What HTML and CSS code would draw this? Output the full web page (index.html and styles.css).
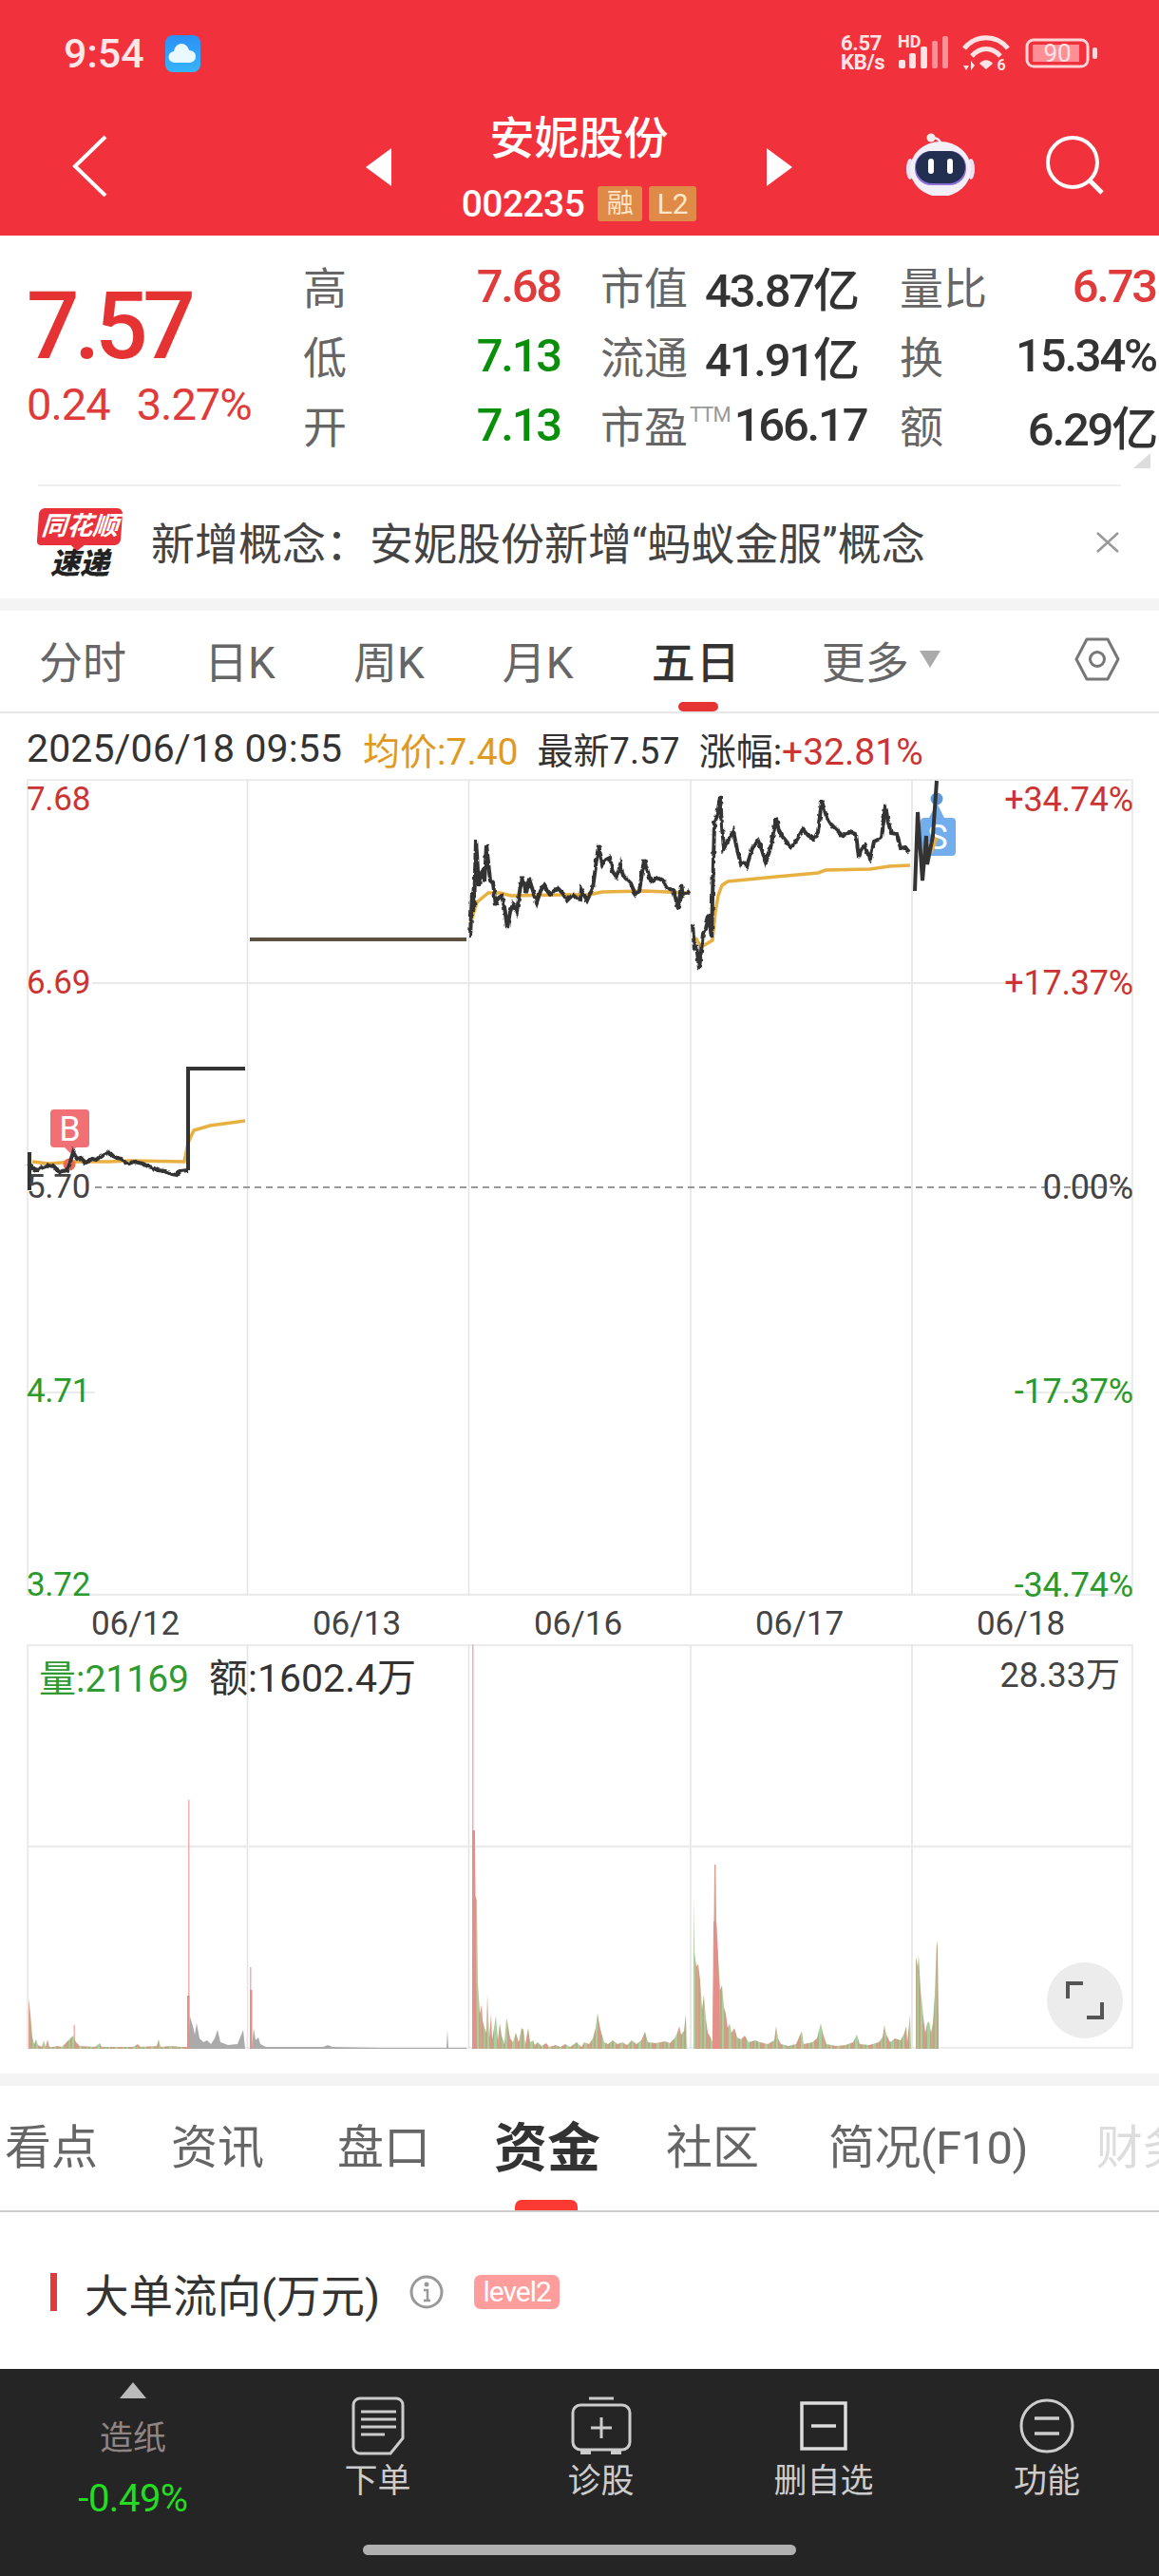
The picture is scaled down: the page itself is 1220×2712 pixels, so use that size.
FILE: index.html
```html
<!DOCTYPE html>
<html lang="zh-CN">
<head>
<meta charset="utf-8">
<title>安妮股份</title>
<link rel="stylesheet" href="styles.css">
</head>
<body>
<div class="page">
  <header class="header">
    <div class="status">
      <div class="status-left">
        <span class="time">9:54</span>
        <svg class="cloud" viewBox="0 0 37 39"><defs><linearGradient id="cg" x1="0" y1="0" x2="0" y2="1"><stop offset="0" stop-color="#2c8ff5"/><stop offset="1" stop-color="#37b4fb"/></linearGradient></defs><rect width="37" height="39" rx="8" fill="url(#cg)"/><path d="M10 29a6 6 0 0 1-1-12c1-5 4-8 8-8s7 3 8 7a6.5 6.5 0 0 1 1 13z" fill="#eaf8ff"/></svg>
      </div>
      <div class="status-right">
        <div class="speed"><span>6.57</span><span>KB/s</span></div>
        <div class="signal">
          <span class="hd">HD</span>
          <svg class="bars" viewBox="0 0 52 34"><rect x="0" y="25" width="7" height="9" rx="2" fill="#ffe3e5"/><rect x="11" y="18" width="7" height="16" rx="2" fill="#ffe3e5"/><rect x="23" y="11" width="7" height="23" rx="2" fill="#ffe3e5"/><rect x="35" y="5" width="6" height="29" rx="2" fill="#ff8f96"/><rect x="46" y="0" width="6" height="34" rx="2" fill="#ff8f96"/></svg>
        </div>
        <svg class="wifi" viewBox="0 -2 50 44"><g fill="none" stroke="#ffe3e5" stroke-width="5"><path d="M2 15C14 0 36 0 48 15"/><path d="M10 23c9-10 21-10 30 0"/></g><path d="M18 31c4-5 10-5 14 0l-7 6z" fill="#ffe3e5"/><text x="41" y="38" class="wifi-num">6</text><path d="M1 33h6l-3 5zM9 38V28l4 5z" fill="#ffe3e5"/></svg>
        <svg class="battery" viewBox="0 0 76 32"><rect x="2" y="2" width="64" height="28" rx="7" fill="none" stroke="#ffd4d7" stroke-width="3"/><rect x="8" y="7" width="49" height="18" fill="#ff8f96"/><rect x="71" y="10" width="5" height="12" rx="2" fill="#ffd4d7"/><text x="34" y="25" class="batt-num">90</text></svg>
      </div>
    </div>
    <nav class="nav">
      <div class="nav-back">
        <svg class="chevron" viewBox="0 0 37 65"><path d="M35 2 3 33l32 31" fill="none" stroke="#fff" stroke-width="4"/></svg>
      </div>
      <div class="nav-mid">
        <svg class="tri" viewBox="0 0 27 40"><path d="M27 0v40L0 20z" fill="#fff"/></svg>
        <div class="nav-title">
          <div class="stock-name">安妮股份</div>
          <div class="stock-code"><span>002235</span><b class="chip chip-a">融</b><b class="chip chip-b">L2</b></div>
        </div>
        <svg class="tri" viewBox="0 0 27 40"><path d="M0 0v40l27-20z" fill="#fff"/></svg>
      </div>
      <div class="nav-right">
        <svg class="robot" viewBox="0 0 72 66">
          <path d="M36 11c-1-5-5-6-9-6" fill="none" stroke="#eef" stroke-width="2.5"/><circle cx="26" cy="5" r="4.5" fill="#eee"/>
          <ellipse cx="4" cy="38" rx="4" ry="11" fill="#e8e2f4"/><ellipse cx="68" cy="38" rx="4" ry="11" fill="#e8e2f4"/>
          <ellipse cx="36" cy="38" rx="32" ry="29" fill="#f2eff8"/>
          <rect x="9" y="19" width="54" height="36" rx="17" fill="#8d6fd8"/>
          <rect x="10" y="19" width="52" height="34" rx="17" fill="#222f50"/>
          <rect x="23" y="27" width="6" height="16" rx="3" fill="#fff"/><rect x="43" y="27" width="6" height="16" rx="3" fill="#fff"/>
        </svg>
        <svg class="search" viewBox="0 0 62 62"><circle cx="29" cy="28" r="26" fill="none" stroke="#fff" stroke-width="4"/><path d="M47 47 60 60" stroke="#fff" stroke-width="5"/></svg>
      </div>
    </nav>
  </header>

  <section class="quote">
    <div class="price">
      <div class="price-main">7.57</div>
      <div class="price-sub"><span>0.24</span><span>3.27%</span></div>
    </div>
    <div class="stats">
      <div class="cell cell-a"><span class="lab">高</span><span class="val up">7.68</span></div>
      <div class="cell cell-b"><span class="lab lab-w">市值</span><span class="val">43.87亿</span></div>
      <div class="cell cell-c"><span class="lab">量比</span><span class="val up">6.73</span></div>
      <div class="cell cell-a"><span class="lab">低</span><span class="val down">7.13</span></div>
      <div class="cell cell-b"><span class="lab lab-w">流通</span><span class="val">41.91亿</span></div>
      <div class="cell cell-c"><span class="lab">换</span><span class="val">15.34%</span></div>
      <div class="cell cell-a"><span class="lab">开</span><span class="val down">7.13</span></div>
      <div class="cell cell-b"><span class="lab">市盈</span><sup class="ttm">TTM</sup><span class="val">166.17</span></div>
      <div class="cell cell-c"><span class="lab">额</span><span class="val">6.29亿</span></div>
    </div>
    <i class="corner"></i>
  </section>

  <section class="news">
    <div class="logo">
      <div class="logo-top">同花顺</div>
      <div class="logo-bot">速递</div>
    </div>
    <p class="news-text">新增概念：安妮股份新增“蚂蚁金服”概念</p>
    <svg class="close" viewBox="0 0 24 22"><path d="M1 1l22 20M23 1 1 21" stroke="#999" stroke-width="2.5" fill="none"/></svg>
  </section>

  <div class="band"></div>

  <div class="ktabs">
    <span>分时</span><span>日K</span><span>周K</span><span>月K</span><span class="on">五日</span>
    <span class="more">更多<i class="more-tri"></i></span>
    <svg class="hex" viewBox="0 0 48 46"><path d="M13 2h22l11 21-11 21H13L2 23z" fill="none" stroke="#777" stroke-width="3" stroke-linejoin="round"/><circle cx="24" cy="23" r="7.5" fill="none" stroke="#777" stroke-width="3"/></svg>
  </div>

  <div class="info">
    <span class="i-date">2025/06/18 09:55</span>
    <span class="i-avg">均价:7.40</span>
    <span class="i-new">最新7.57</span>
    <span class="i-chg">涨幅:<em>+32.81%</em></span>
  </div>

  <div class="chart">
    <svg class="plot" viewBox="28 820 1165 860">
      <defs>
        <filter id="jit" filterUnits="userSpaceOnUse" x="28" y="820" width="1165" height="860" color-interpolation-filters="sRGB">
          <feTurbulence type="fractalNoise" baseFrequency="0.22" numOctaves="1" seed="4"/>
          <feDisplacementMap in="SourceGraphic" scale="4" xChannelSelector="R" yChannelSelector="G"/>
        </filter>
      </defs>
      <g class="grid">
        <path d="M29 821H1192V1679H29Z" class="outer"/>
        <path d="M260.500 821V1680M493.500 821V1680M727 821V1680M960 821V1680M97 1035H1070M28 1466H100M1070 1466H1192"/>
      </g>
      <path d="M100 1250H1192" class="dash"/>
      <path d="M34 1223 51 1225 79 1223 115 1223 138 1222 194 1223 198 1203 204 1190 221 1185 258 1180" class="avg"/>
      <path d="M495 973 502 950 514 940 526 940 538 943 593 942 620 942 634 939 679 938 725 940" class="avg"/>
      <path d="M732 987 738 997 750 990 753 960 756 943 760 932 766 928 817 923 861 919 869 916 916 915 936 912 958 911" class="avg"/>
      <path d="M263 989H491" class="flat"/>
      <circle cx="73" cy="1226" r="6.500" class="b-dot"/>
      <path d="M53 1172a4 4 0 0 1 4-4h33a4 4 0 0 1 4 4v32a4 4 0 0 1-4 4H80l-6 6-6-6H57a4 4 0 0 1-4-4z" class="b-tag"/>
      <text x="73.500" y="1201" class="tag-t">B</text>
      <circle cx="986" cy="841" r="6.500" class="s-dot"/>
      <path d="M969 865a4 4 0 0 1 4-4h5l8-16 8 16h8a4 4 0 0 1 4 4v32a4 4 0 0 1-4 4h-29a4 4 0 0 1-4-4z" class="s-tag"/>
      <text x="987" y="894" class="tag-t">S</text>
      <path d="M968 897 980 897 986 882" class="avg"/>
      <path d="M31 1213V1253" class="px-plain"/>
      <path d="M198 1232V1125H258" class="px-plain"/>
      <path d="M31 1225 34 1230 40 1232 45 1229 51 1227 57 1228 60 1232 63 1234 70 1232 73 1226 77 1213 81 1220 85 1219 90 1224 93 1223 97 1220 101 1221 108 1217 115 1213 119 1217 123 1219 128 1220 133 1225 136 1225 141 1223 150 1225 156 1228 160 1229 166 1232 174 1233 180 1236 186 1237 190 1233 198 1232" class="px"/>
      <path d="M495 987 497 940 499 960 501 883 504 933 506 920 508 917 510 928 512 889 516 927 519 930 522 953 525 945 528 943 531 955 534 977 537 960 540 952 544 960 547 938 550 923 554 940 557 925 561 938 565 950 569 938 573 932 576 938 579 942 583 938 587 935 592 940 597 948 603 942 607 946 611 947 612 937 618 948 624 935 630 890 634 910 638 905 642 903 645 918 649 923 653 910 656 922 659 925 664 930 669 942 673 938 678 905 682 918 685 928 692 924 699 928 702 935 709 937 714 957 717 931 719 943 726 938" class="px"/>
      <path d="M729 973 731 1000 733 995 736 1020 740 983 743 978 746 963 749 987 752 867 755 858 758 839 760 870 762 893 767 884 772 875 776 895 780 910 783 908 786 912 792 893 798 885 802 895 806 908 811 893 817 862 820 875 823 880 828 886 833 892 839 884 845 873 851 880 857 883 861 876 865 843 870 860 875 868 881 874 887 880 894 876 901 878 904 903 907 893 910 890 913 898 916 904 920 886 928 882 932 848 935 866 938 877 944 878 948 893 953 892 957 897" class="px"/>
      <path d="M963 938 966 855 971 927 975 880 976 910 982 880 986 822" class="px-plain"/>
    </svg>
    <span class="ax l up-t ax-1">7.68</span>
    <span class="ax l up-t ax-2">6.69</span>
    <span class="ax l mid-t ax-3">5.70</span>
    <span class="ax l dn-t ax-4">4.71</span>
    <span class="ax l dn-t ax-5">3.72</span>
    <span class="ax r up-t ax-1">+34.74%</span>
    <span class="ax r up-t ax-2">+17.37%</span>
    <span class="ax r mid-t ax-3">0.00%</span>
    <span class="ax r dn-t ax-4">-17.37%</span>
    <span class="ax r dn-t ax-5">-34.74%</span>
  </div>

  <div class="dates"><span>06/12</span><span>06/13</span><span>06/16</span><span>06/17</span><span>06/18</span></div>

  <div class="vol">
    <svg class="plot" viewBox="28 1731 1165 426">
      <defs>
        <pattern id="mix" width="19" height="10" patternUnits="userSpaceOnUse">
          <rect width="19" height="10" fill="#bda886"/>
          <rect x="0" width="2" height="10" fill="#a8cf9c"/>
          <rect x="3" width="2" height="10" fill="#e3938b"/>
          <rect x="7" width="3" height="10" fill="#a8cf9c"/>
          <rect x="11" width="2" height="10" fill="#dca08f"/>
          <rect x="15" width="2" height="10" fill="#a8c593"/>
        </pattern>
      </defs>
      <g class="grid">
        <path d="M29 1732H1192V2156H29Z" class="outer"/>
        <path d="M260.500 1732V2157M493.500 1732V2157M727 1732V2157M960 1732V2157"/>
        <path d="M28 1944H1192" class="outer"/>
      </g>
      <path d="M198 2157V1895h1.500V2157zM263 2157V2071h1.500V2157zM497 2157V1731h1.500V2157zM752 2157V1963h1.500V2157zM77.500 2157V2132h1.500V2157z" class="v-pale"/>
      <path d="M30 2157V2104L32 2120 34 2145 36 2152 38 2147 40 2153 44 2155 46 2148 48 2155 50 2147 52 2155 56 2155 60 2154 65 2155 70 2150 74 2146 77 2143 80 2150 84 2154 100 2155 105 2151 107 2155 115 2155 140 2155 145 2152 148 2155 165 2154 167 2147 169 2155 180 2154 190 2155 197 2155V2157Z" class="v-mix"/>
      <path d="M198 2157L200 2123 203 2133 205 2142 207 2130 210 2146 214 2150 218 2148 222 2152 226 2146 229 2137 232 2150 240 2153 250 2152 256 2137 258 2157ZM265 2157L267 2135 269 2148 272 2145 274 2152 280 2155 300 2155 340 2155 345 2153 350 2155 400 2156 470 2156 471 2137 472 2156 491 2156V2157Z" class="v-gray"/>
      <path d="M499 2157V1994L502 2000 503 2087 505 2120 507 2110 508 2127 510 2135 512 2140 513 2099 515 2145 517 2120 518 2147 520 2135 522 2122 524 2148 526 2130 528 2143 531 2152 533 2125 534 2128 537 2146 540 2150 543 2140 546 2150 549 2135 551 2137 553 2152 556 2135 558 2150 561 2148 563 2153 566 2150 570 2154 575 2151 578 2155 585 2153 590 2155 595 2152 600 2155 607 2150 610 2153 612 2155 615 2150 620 2152 624 2146 627 2135 629 2119 631 2132 633 2140 636 2150 640 2152 645 2148 650 2152 655 2150 660 2153 665 2148 670 2152 675 2148 679 2139 682 2150 690 2151 700 2149 705 2151 710 2146 713 2140 715 2133 717 2142 720 2138 722 2120 723 2157ZM730 2157V1996L731 2055 733 2070 735 2068 737 2085 739 2115 741 2100 743 2125 745 2140 748 2145 750 2150 751 2080 752 1963 753 1963 754 2023 756 2060 758 2095 760 2090 762 2113 764 2120 766 2135 768 2130 770 2140 773 2135 776 2145 780 2147 784 2143 788 2150 795 2148 800 2150 808 2152 815 2148 817 2133 819 2146 822 2152 830 2154 838 2152 844 2138 846 2152 855 2150 860 2146 864 2130 866 2140 870 2152 880 2154 890 2153 898 2150 902 2142 905 2152 915 2153 925 2150 929 2145 931 2132 933 2142 937 2150 942 2146 948 2148 952 2140 954 2133 955 2150 958 2120 959 2157ZM964 2157V2060L966 2070 967 2058 969 2095 970 2103 972 2125 974 2140 976 2130 978 2128 980 2140 982 2130 984 2100 985 2070 986 2043 987 2050 988 2127V2157Z" class="v-mix"/>
      <path d="M497 2157V1927H500L501 2060 502 2157ZM750 2157L751 2023 754 2023 757 2090 758 2157ZM197 2157V2101H199.500V2157ZM263 2157V2095H265.500V2157Z" class="v-red"/>
    </svg>
    <span class="v-now"><em>量:21169</em><span class="v-amt">额:1602.4万</span></span>
    <span class="v-max">28.33万</span>
    <button class="expand" type="button" aria-label="expand">
      <svg viewBox="0 0 40 40"><path d="M2 18V2H18M38 22V38H22" fill="none" stroke="#555" stroke-width="4"/></svg>
    </button>
  </div>

  <div class="band band-2"></div>

  <div class="tabs">
    <span>看点</span><span>资讯</span><span>盘口</span><span class="on">资金</span><span>社区</span><span class="f10">简况(F10)</span><span class="fade">财务</span>
  </div>

  <section class="flow">
    <i class="flow-bar"></i>
    <h2 class="flow-title">大单流向(万元)</h2>
    <svg class="flow-info" viewBox="0 0 36 36"><circle cx="18" cy="18" r="16" fill="none" stroke="#999" stroke-width="3"/><circle cx="18" cy="10" r="2.500" fill="#999"/><path d="M15 16h4v11m-4 0h7" fill="none" stroke="#999" stroke-width="2.500"/></svg>
    <span class="flow-chip">level2</span>
  </section>

  <footer class="bottom">
    <div class="b-index">
      <i class="b-up"></i>
      <span class="b-name">造纸</span>
      <span class="b-pct">-0.49%</span>
    </div>
    <div class="b-item">
      <svg class="b-ic" viewBox="0 0 56 62"><path d="M9 2H47a7 7 0 0 1 7 7V44L41 60H9a7 7 0 0 1-7-7V9a7 7 0 0 1 7-7Z" fill="none" stroke="#ccc" stroke-width="3"/><path d="M10 16H47M10 24H47M10 32H47M10 40H35" stroke="#ccc" stroke-width="3" fill="none"/></svg>
      <span>下单</span>
    </div>
    <div class="b-item">
      <svg class="b-ic" viewBox="0 0 64 62"><path d="M19 2H45" stroke="#ccc" stroke-width="3"/><rect x="2" y="9" width="60" height="47" rx="8" fill="none" stroke="#ccc" stroke-width="3"/><path d="M32 22V44M21 33H43" stroke="#ccc" stroke-width="3"/><path d="M10 57H21V61H10ZM42 57H53V61H42Z" fill="#ccc"/></svg>
      <span>诊股</span>
    </div>
    <div class="b-item">
      <svg class="b-ic" viewBox="0 0 50 62"><rect x="2" y="7" width="46" height="48" fill="none" stroke="#ddd" stroke-width="3.500"/><path d="M12 31H38" stroke="#ddd" stroke-width="3.500"/></svg>
      <span>删自选</span>
    </div>
    <div class="b-item">
      <svg class="b-ic" viewBox="0 0 58 62"><circle cx="29" cy="31" r="27" fill="none" stroke="#ccc" stroke-width="3"/><path d="M16 23H42M16 39H42" stroke="#ccc" stroke-width="3.500"/></svg>
      <span>功能</span>
    </div>
    <i class="home"></i>
  </footer>
</div>
</body>
</html>
```
FILE: styles.css
```css
* { box-sizing: border-box; margin: 0; padding: 0; }
html, body { background: #fff; }
body { width: 1220px; font-family: Roboto, "Noto Sans CJK SC", sans-serif; color: #333; }
.page { width: 1220px; height: 2712px; overflow: hidden; }
i, em { font-style: normal; }

/* header */
.header { height: 248px; background: #f1323c; color: #fff; }
.status { height: 112px; display: flex; justify-content: space-between; align-items: center; padding: 0 65px 0 67px; }
.status-left { display: flex; align-items: center; gap: 22px; }
.time { font-size: 43px; font-weight: 500; color: #ffe6e8; }
.cloud { width: 37px; height: 39px; }
.status-right { display: flex; align-items: center; }
.speed { display: flex; flex-direction: column; width: 53px; font-size: 22px; font-weight: 700; line-height: 20px; color: #ffe3e5; white-space: nowrap; letter-spacing: -0.3px; }
.signal { position: relative; width: 58px; height: 36px; margin-left: 2px; }
.hd { position: absolute; left: 5px; top: -3px; font-size: 18px; font-weight: 700; line-height: 18px; color: #ffe3e5; }
.bars { position: absolute; right: 0; top: 0; width: 52px; height: 34px; }
.wifi { width: 50px; height: 44px; margin-left: 15px; }
.wifi-num { font: 700 16px Roboto, sans-serif; fill: #ffe3e5; text-anchor: middle; }
.battery { width: 76px; height: 32px; margin-left: 16px; }
.batt-num { font: 400 26px Roboto, sans-serif; fill: #ffe3e5; text-anchor: middle; }

.nav { height: 136px; display: flex; }
.nav-back { width: 385px; padding: 30px 0 0 76px; }
.chevron { width: 37px; height: 65px; display: block; }
.nav-mid { width: 449px; display: flex; align-items: center; height: 124px; }
.tri { width: 27px; height: 40px; margin-top: 3px; }
.nav-title { flex: 1; text-align: center; padding-top: 4px; }
.stock-name { font-size: 47px; line-height: 54px; color: #fff; font-weight: 500; }
.stock-code { display: flex; justify-content: center; align-items: center; gap: 7px; margin-top: 23px; height: 38px; font-size: 39px; font-weight: 500; }
.stock-code span { margin-right: 7px; letter-spacing: -0.6px; }
.chip { display: block; height: 37px; line-height: 37px; border-radius: 3px; background: #e08a47; color: #ffe6c8; font-size: 28px; font-weight: 400; text-align: center; }
.chip-a { width: 47px; }
.chip-b { width: 50px; font-size: 30px; }
.nav-right { display: flex; padding: 28px 0 0 120px; gap: 74px; align-items: flex-start; }
.robot { width: 72px; height: 66px; }
.search { width: 62px; height: 62px; margin-top: 3px; }

/* quote */
.quote { position: relative; height: 262px; display: flex; }
.price { width: 319px; padding: 42px 0 0 28px; }
.price-main { font-size: 98px; line-height: 108px; font-weight: 500; color: #e53333; letter-spacing: -5.5px; }
.price-sub { display: flex; gap: 28px; font-size: 47px; line-height: 54px; color: #e03a3a; margin-top: 1px; letter-spacing: -1px; }
.stats { display: grid; grid-template-columns: 313px 315px 271px; grid-auto-rows: 73px; padding-top: 18px; align-content: start; }
.cell { display: flex; align-items: center; }
.cell-a { justify-content: space-between; padding-right: 42px; }
.cell-c { justify-content: space-between; padding-right: 1px; }
.lab { font-size: 46px; color: #666; white-space: nowrap; margin-bottom: 6px; }
.lab-w { width: 110px; }
.val { font-size: 49px; font-weight: 500; color: #333; letter-spacing: -2.2px; white-space: nowrap; margin-bottom: 2px; }
.up { color: #e03a3a; }
.down { color: #0a8f0a; }
.ttm { font-size: 22px; color: #999; margin: -24px 4px 0 2px; letter-spacing: -1px; }
.corner { position: absolute; left: 1193px; top: 229px; width: 0; height: 0; border-style: solid; border-width: 0 0 16px 18px; border-color: transparent transparent #ddd transparent; }

/* news */
.news { height: 120px; margin-left: 40px; width: 1140px; border-top: 2px solid #eee; display: flex; align-items: center; position: relative; }
.logo { width: 88px; margin-top: 2px; }
.logo-top { height: 39px; background: #e8313a; border-radius: 6px 6px 6px 4px; color: #fff; font-size: 27px; line-height: 39px; font-weight: 700; font-style: italic; text-align: center; position: relative; transform: skewX(-4deg); }
.logo-top::after { content: ""; position: absolute; left: 36px; bottom: -6px; border-style: solid; border-width: 6px 7px 0 7px; border-color: #e8313a transparent transparent transparent; }
.logo-bot { font-size: 31px; line-height: 32px; font-weight: 900; font-style: italic; color: #222; text-align: center; margin-top: 4px; }
.news-text { margin-left: 31px; margin-bottom: 5px; font-size: 46px; color: #444; white-space: nowrap; }
.close { width: 24px; height: 22px; margin-left: auto; margin-right: 2px; }

.band { height: 13px; background: #f4f4f4; }

/* k tabs */
.ktabs { height: 108px; border-bottom: 2px solid #e6e6e6; display: flex; align-items: center; padding: 0 41px 4px 41px; gap: 82px; font-size: 46px; color: #666; position: relative; }
.ktabs .on { color: #333; position: relative; font-weight: 500; letter-spacing: 1px; }
.ktabs .on::after { content: ""; position: absolute; left: 28px; right: 24px; top: 78px; height: 10px; background: #e63333; border-radius: 5px; }
.more { display: flex; align-items: center; margin-left: 3px; }
.more-tri { margin-left: 11px; border-style: solid; border-width: 18px 11px 0 11px; border-color: #aaa transparent transparent transparent; }
.hex { width: 48px; height: 46px; margin-left: auto; }

.info { height: 69px; display: flex; align-items: center; padding: 4px 0 0 28px; font-size: 39px; color: #333; white-space: nowrap; }
.i-date { font-size: 41px; letter-spacing: 0.1px; }
.i-avg { margin-left: 22px; color: #e09a22; }
.i-new { margin-left: 20px; font-size: 38px; }
.i-chg { margin-left: 20px; }
.i-chg em { color: #cc3333; }

/* price chart */
.chart { position: relative; margin-left: 28px; width: 1165px; height: 860px; }
.plot { display: block; width: 100%; height: 100%; }
.grid path { fill: none; stroke: #e4e4e4; stroke-width: 1.500; }
.grid .outer { stroke: #ececec; stroke-width: 2.500; }
.dash { fill: none; stroke: #999; stroke-width: 2; stroke-dasharray: 7 5; }
.avg { fill: none; stroke: #e8b040; stroke-width: 3.500; }
.px { fill: none; stroke: #333; stroke-width: 4; filter: url(#jit); }
.px-plain { fill: none; stroke: #333; stroke-width: 4; }
.flat { stroke: #5c5140; stroke-width: 4; }
.b-tag { fill: #f07076; }
.b-dot { fill: #ec6a50; }
.s-tag { fill: #72aeee; }
.s-dot { fill: #5c9ad8; }
.tag-t { font: 400 36px Roboto, sans-serif; fill: #fff; text-anchor: middle; }
.ax { position: absolute; font-size: 35px; line-height: 40px; white-space: nowrap; }
.ax.l { left: 0; letter-spacing: -0.3px; }
.ax.r { right: 0; font-size: 36px; letter-spacing: -0.2px; }
.ax-1 { top: 2px; }
.ax-2 { top: 195px; }
.ax-3 { top: 410px; }
.ax-4 { top: 625px; }
.ax-5 { top: 829px; }
.up-t { color: #cc3333; }
.mid-t { color: #444; }
.dn-t { color: #2a9a2a; }

.dates { height: 51px; margin-left: 26px; width: 1165px; display: grid; grid-template-columns: repeat(5, 233px); align-items: center; text-align: center; font-size: 35px; color: #444; padding-top: 8px; }

/* volume */
.vol { position: relative; margin-left: 28px; width: 1165px; height: 426px; }
.v-pale { fill: #f0b0b0; }
.v-gray { fill: #aaa; }
.v-mix { fill: url(#mix); }
.v-red { fill: #e58f88; }
.v-now { position: absolute; left: 13px; top: 14px; font-size: 39px; line-height: 44px; color: #333; white-space: nowrap; }
.v-now em { color: #2f9a2f; margin-right: 21px; }
.v-amt { font-size: 41px; }
.v-max { position: absolute; right: 14px; top: 12px; font-size: 36px; line-height: 42px; color: #444; }
.expand { position: absolute; left: 1074px; top: 335px; width: 80px; height: 80px; border: 0; border-radius: 50%; background: #ececec; display: flex; align-items: center; justify-content: center; }
.expand svg { width: 40px; height: 40px; }

.band-2 { margin-top: 26px; }

/* tabs */
.tabs { height: 133px; border-bottom: 2px solid #ccc; display: flex; align-items: center; padding: 0 0 10px 5px; gap: 77px; font-size: 49px; color: #666; white-space: nowrap; overflow: hidden; position: relative; }
.tabs .on { font-size: 56px; font-weight: 700; color: #333; position: relative; margin-left: -10px; margin-right: -8px; }
.tabs .on::after { content: ""; position: absolute; left: 22px; top: 100px; width: 66px; height: 13px; background: #fb3a33; border-radius: 7px 7px 0 0; }
.tabs .f10 { margin-left: -4px; letter-spacing: -0.6px; }
.tabs .fade { color: #ddd; margin-left: -5px; }

/* flow */
.flow { height: 165px; display: flex; align-items: center; padding: 3px 0 0 53px; }
.flow-bar { width: 7px; height: 40px; background: #e03a3a; }
.flow-title { margin-left: 29px; font-size: 46.500px; font-weight: 400; color: #333; white-space: nowrap; }
.flow-info { width: 36px; height: 36px; margin-left: 31px; }
.flow-chip { margin-left: 32px; width: 90px; height: 36px; border-radius: 7px; background: #ff9c9c; color: #fff; font-size: 30px; line-height: 35px; text-align: center; letter-spacing: -1px; }

/* bottom */
.bottom { height: 218px; background: #252525; position: relative; display: grid; grid-template-columns: 280px 235px 235px 234px 236px; padding-top: 29px; }
.b-index { display: flex; flex-direction: column; align-items: center; margin-top: -15px; }
.b-up { border-style: solid; border-width: 0 14px 17px 14px; border-color: transparent transparent #bbb transparent; }
.b-name { margin-top: 18px; font-size: 35px; line-height: 50px; color: #8f8585; }
.b-pct { margin-top: 15px; font-size: 40px; line-height: 46px; color: #22dd22; letter-spacing: -0.5px; }
.b-item { display: flex; flex-direction: column; align-items: center; height: 120px; font-size: 35px; color: #ccc; }
.b-ic { height: 62px; display: block; flex: none; }
.b-item span { margin-top: 3px; line-height: 50px; }
.home { position: absolute; left: 382px; top: 185px; width: 456px; height: 11px; border-radius: 6px; background: #b0b0b0; }
```
